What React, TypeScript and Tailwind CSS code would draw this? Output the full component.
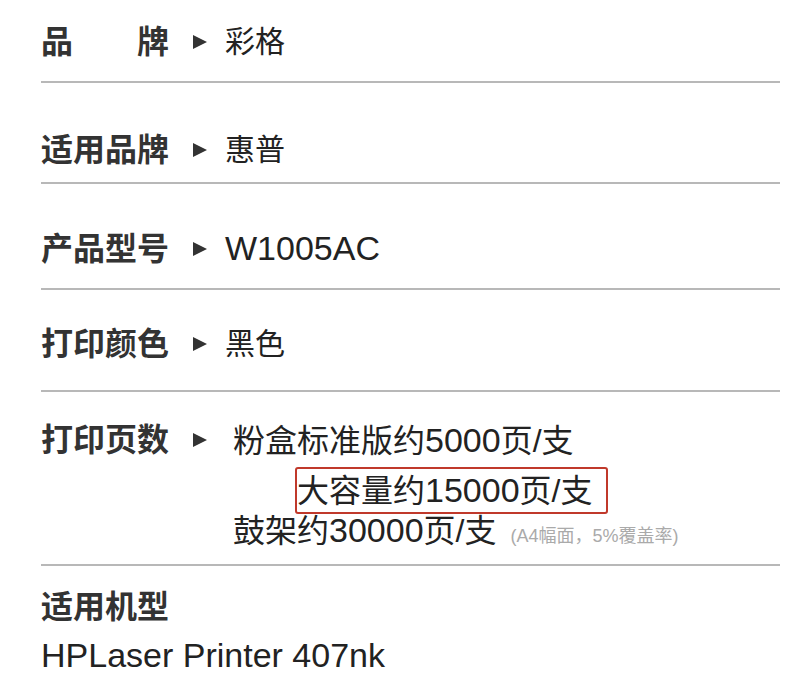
const font = { fontFamily: '"Liberation Sans", "Noto Sans CJK SC", sans-serif' }

function Arrow() {
    return (
        <span className="mr-[18px] ml-[24px] inline-block h-0 w-0 border-y-[7px] border-l-[14px] border-y-transparent border-l-[#333]" />
    )
}

function Label({ text }: { text: string }) {
    if (text === "品牌") {
        return (
            <span className="flex w-[128px] justify-between text-[32px] font-bold text-[#333]">
                <span>品</span>
                <span>牌</span>
            </span>
        )
    }
    return <span className="w-[128px] text-[32px] font-bold text-[#333]">{text}</span>
}

function Row({ label, children, className }: { label: string; children: React.ReactNode; className: string }) {
    return (
        <div className={"flex items-center border-b-2 border-[#b8b8b8] leading-[40px] " + className}>
            <Label text={label} />
            <Arrow />
            <span className="text-[30px] text-[#222]">{children}</span>
        </div>
    )
}

export default function App() {
    return (
        <div className="min-h-screen bg-white pl-[41px] pr-[30px]" style={font}>
            <div className="w-[739px]">
                <Row label="品牌" className="pt-[22px] pb-[19px]">彩格</Row>
                <Row label="适用品牌" className="pt-[47px] pb-[12px]">惠普</Row>
                <Row label="产品型号" className="pt-[44px] pb-[18px]">
                    <span className="text-[34px]">W1005AC</span>
                </Row>
                <Row label="打印颜色" className="pt-[34px] pb-[26px]">黑色</Row>

                {/* print pages */}
                <div className="flex items-start border-b-2 border-[#b8b8b8] pt-[28px] pb-[18px]">
                    <div className="flex h-[40px] items-center leading-[40px]">
                        <Label text="打印页数" />
                        <Arrow />
                    </div>
                    <div className="ml-[8px] text-[32px] text-[#222]">
                        <div className="h-[40px] leading-[40px]">
                            粉盒标准版约<span className="text-[34px]">5000</span>页/支
                        </div>
                        <div className="mt-[7px] ml-[62px] h-[47px] w-[313px] rounded-[3px] border-2 border-[#c0392b] leading-[43px]">
                            大容量约<span className="text-[34px]">15000</span>页/支
                        </div>
                        <div className="flex h-[32px] items-baseline leading-[32px]">
                            <span>
                                鼓架约<span className="text-[34px]">30000</span>页/支
                            </span>
                            <span className="ml-[14px] text-[18px] text-[#aaa]">(A4幅面，5%覆盖率)</span>
                        </div>
                    </div>
                </div>

                <div className="mt-[21px] h-[40px] leading-[40px]">
                    <Label text="适用机型" />
                </div>
                <div className="mt-[8px] h-[40px] text-[34px] leading-[40px] text-[#222]">HPLaser Printer 407nk</div>
            </div>
        </div>
    )
}
